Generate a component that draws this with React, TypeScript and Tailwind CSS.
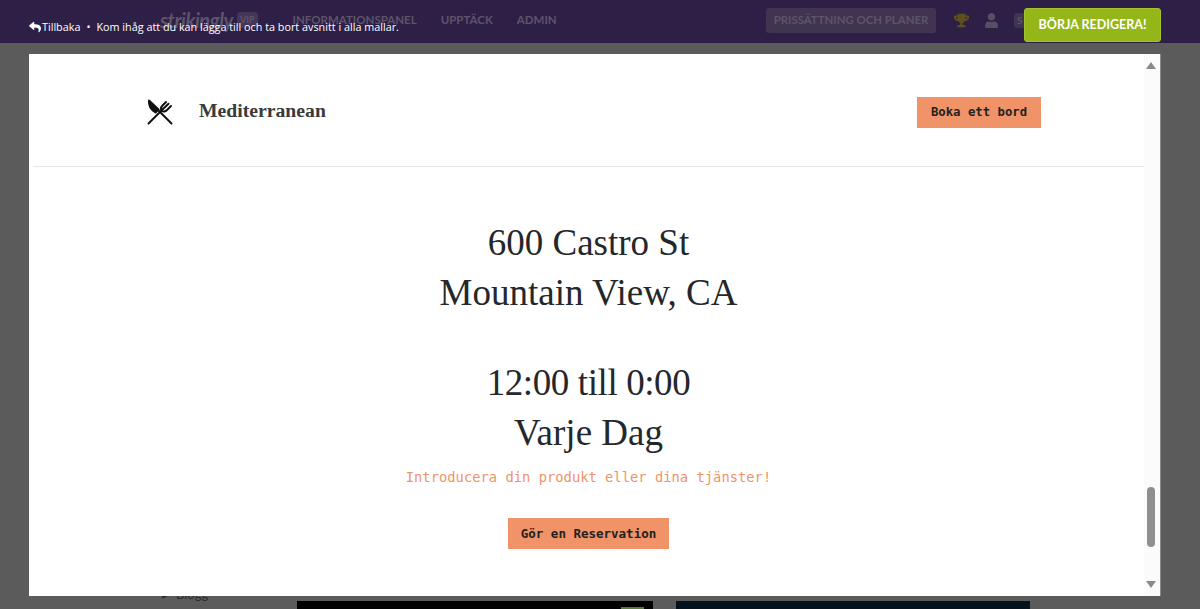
import { FaReply, FaTrophy, FaUser } from 'react-icons/fa';

const lato = "font-['Lato',sans-serif]";
const serif = "font-['Liberation_Serif',serif]";
const mono = "font-['DejaVu_Sans_Mono',monospace]";

function TopNav() {
  return (
    <header className="flex h-[43px] items-center bg-[#2e1f47] pb-[3px] text-[#5d5469]">
      <span className="ml-[160px] w-[77px] text-[20px] font-bold italic leading-none tracking-tight">strikingly</span>
      <span className="rounded-sm bg-[#433757] px-[3px] text-[9px] font-bold leading-[16px]">VIP</span>
      <nav className="ml-[35px] flex gap-[24px] text-[11.5px] font-bold">
        <span>INFORMATIONSPANEL</span>
        <span>UPPTÄCK</span>
        <span>ADMIN</span>
      </nav>
      <span className="ml-auto flex h-[25px] w-[170px] items-center justify-center rounded-[3px] bg-[#403451] text-[11.4px] font-bold">
        PRISSÄTTNING OCH PLANER
      </span>
      <FaTrophy className="ml-[18px] text-[#5f4f1e]" size={15} />
      <FaUser className="ml-[15px] text-[#574e64]" size={15} />
      <span className="ml-[15px] mr-[171px] w-[15px] rounded-sm bg-[#403451] pl-[3px] text-[10px] font-bold">S</span>
    </header>
  );
}

function Backdrop() {
  return (
    <main className="flex h-[566px] bg-[#5b5b5b]">
      <aside className="flex w-[297px] items-start gap-[7px] pl-[162px] pt-[545px] text-[13px] leading-none text-[#2b2b33]">
        <span>▸</span>
        <span>Blogg</span>
      </aside>
      <div className="flex items-start gap-[23px] pt-[558px]">
        <div className="flex h-[8px] w-[356px] justify-end bg-black pr-[9px]">
          <div className="mt-[6px] h-[2px] w-[23px] bg-[#5b7a3a]" />
        </div>
        <div className="h-[8px] w-[354px] bg-[#04121c]" />
      </div>
    </main>
  );
}

function ForkKnife() {
  return (
    <svg width="26" height="26" viewBox="0 0 26 26" fill="none" stroke="#111" strokeWidth="2" strokeLinecap="round" strokeLinejoin="round">
      <path d="M24.5 24.5 L11 11" />
      <path d="M2 1.5 C1.5 6 4 10.5 8.5 13.5 L11.5 10.5 Z" fill="#111" />
      <path d="M1.5 24.5 L14.5 11.5" />
      <path d="M14.5 11.5 C13 9.5 14 8 15.5 6.5 L19 3 M14.5 11.5 C16.5 13.5 18.5 12.5 20 11 L24 7 M15.5 10.5 L21.5 4.8" />
    </svg>
  );
}

function Scrollbar() {
  return (
    <div className="flex w-[16px] flex-col items-center bg-[#fbfbfb] pr-[2px] pt-[8px]">
      <div className="h-0 w-0 border-x-[5px] border-b-[7px] border-x-transparent border-b-[#8a8a8a]" />
      <div className="mt-[418px] h-[60px] w-[8px] rounded bg-[#8f8f8f]" />
      <div className="mt-[34px] h-0 w-0 border-x-[5px] border-t-[7px] border-x-transparent border-t-[#8a8a8a]" />
    </div>
  );
}

function Modal() {
  return (
    <div className="absolute left-[29px] top-[54px] flex h-[542px] w-[1132px] border-r border-[#8a8a8a] bg-white pl-[4px]">
      <div className="flex-1">
        <div className="flex h-[113px] items-center border-b border-[#e8e8e8] pl-[114px] pr-[103px] pt-[4px]">
          <ForkKnife />
          <span className={`${serif} mb-[2px] ml-[26px] text-[19.7px] font-bold text-[#3a3a3a]`}>Mediterranean</span>
          <button className={`${mono} ml-auto h-[31px] w-[124px] bg-[#f09369] text-[12.3px] font-bold text-[#222]`}>
            Boka ett bord
          </button>
        </div>
        <div className="flex flex-col items-center text-center">
          <div className={`${serif} mt-[51px] text-[37px] leading-[50px] text-[#24272b]`}>
            <p>600 Castro St</p>
            <p>Mountain View, CA</p>
            <p className="mt-[40px] tracking-[-0.4px]">12:00 till 0:00</p>
            <p>Varje Dag</p>
          </div>
          <p className={`${mono} mt-[9px] text-[13.8px] leading-[20px] text-[#f09369]`}>
            Introducera din produkt eller dina tjänster!
          </p>
          <button className={`${mono} mt-[31px] h-[31px] w-[161px] bg-[#f09369] pt-[2px] text-[12.5px] font-bold text-[#222]`}>
            Gör en Reservation
          </button>
        </div>
      </div>
      <Scrollbar />
    </div>
  );
}

export default function App() {
  return (
    <div className={`${lato} relative h-[609px] w-[1200px] overflow-hidden`}>
      <TopNav />
      <Backdrop />
      <div className="absolute left-[29px] top-[19px] flex items-center font-['Open_Sans',sans-serif] text-[10.8px] leading-[16px] text-white">
        <FaReply size={12} />
        <span className="ml-[1px]">Tillbaka</span>
        <span className="mx-[6px]">•</span>
        <span>Kom ihåg att du kan lägga till och ta bort avsnitt i alla mallar.</span>
      </div>
      <button className="absolute left-[1024px] top-[8px] h-[34px] w-[137px] rounded-[3px] border border-[#a4c22c] bg-[#94b619] text-[12.5px] font-bold text-white">
        BÖRJA REDIGERA!
      </button>
      <Modal />
    </div>
  );
}
